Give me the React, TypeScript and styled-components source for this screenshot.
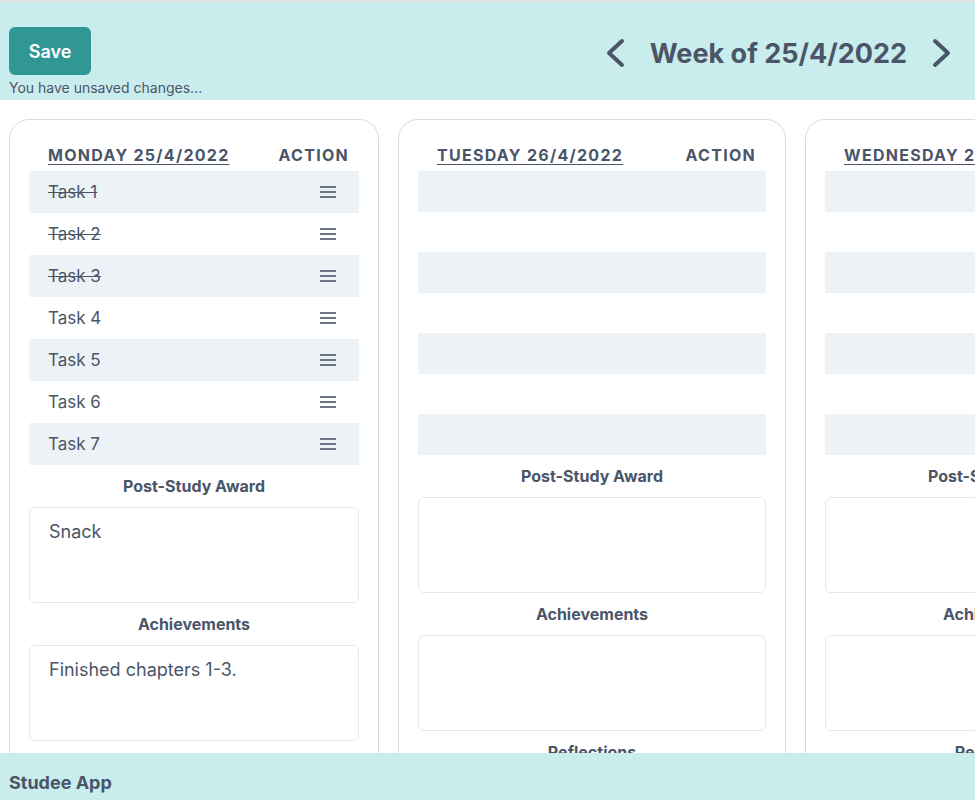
import styled, { createGlobalStyle } from "styled-components";

const GlobalStyle = createGlobalStyle`
  html, body {
    margin: 0;
    padding: 0;
  }
  body {
    font-family: Inter, "Noto Sans", sans-serif;
    color: #4a5568;
    background: #ffffff;
    border-top: 2px solid #e4e4e4;
    overflow: hidden;
  }
`;

const Header = styled.header`
  display: flex;
  justify-content: space-between;
  align-items: flex-start;
  background: #c9eced;
  padding: 25px 23px 3px 9px;
`;

const SaveGroup = styled.div`
  display: flex;
  flex-direction: column;
  align-items: flex-start;
`;

const SaveButton = styled.button`
  height: 48px;
  width: 82px;
  border: none;
  border-radius: 6px;
  background: #319795;
  color: #ffffff;
  font-family: inherit;
  font-size: 18px;
  font-weight: 600;
  cursor: pointer;
`;

const Unsaved = styled.div`
  margin-top: 4px;
  font-size: 14px;
  line-height: 18px;
  color: #4a5568;
`;

const WeekNav = styled.nav`
  display: flex;
  align-items: center;
  gap: 25px;
  height: 52px;
`;

const WeekTitle = styled.h1`
  margin: 0;
  font-size: 27px;
  font-weight: 700;
  color: #4a5568;
`;

const ArrowButton = styled.button`
  display: flex;
  padding: 0;
  border: none;
  background: none;
  color: #4a5568;
  cursor: pointer;
`;

const Board = styled.main`
  display: flex;
  gap: 19px;
  padding: 19px 0 0 9px;
  align-items: flex-start;
`;

const Card = styled.section<{ $width: number }>`
  flex: none;
  width: ${(p) => p.$width}px;
  padding: 19px 19px 60px;
  border: 1px solid #d3dce8;
  border-radius: 20px;
  background: #ffffff;
`;

const HeadRow = styled.div`
  display: flex;
  justify-content: space-between;
  align-items: center;
  height: 32px;
  padding: 0 10px 0 19px;
  font-size: 16px;
  font-weight: 700;
  letter-spacing: 0.08em;
  text-transform: uppercase;
  white-space: nowrap;
`;

const DayName = styled.span`
  text-decoration: underline;
  text-underline-offset: 3px;
  text-decoration-thickness: 1px;
`;

const TaskRow = styled.div<{ $striped: boolean; $empty?: boolean }>`
  display: flex;
  justify-content: space-between;
  align-items: center;
  height: ${(p) => (p.$empty ? "40.5px" : "42px")};
  padding: 0 23px 0 19px;
  background: ${(p) => (p.$striped ? "#edf2f7" : "transparent")};
`;

const TaskName = styled.span<{ $done: boolean }>`
  font-size: 17px;
  color: #4a5568;
  text-decoration: ${(p) => (p.$done ? "line-through" : "none")};
`;

const SectionLabel = styled.h3`
  margin: 11px 0;
  text-align: center;
  font-size: 16px;
  line-height: 20px;
  font-weight: 700;
`;

const NoteBox = styled.div`
  height: 96px;
  box-sizing: border-box;
  padding: 12px 19px;
  border: 1px solid #e2e8f0;
  border-radius: 6px;
  font-size: 18px;
  line-height: 24px;
`;

const Footer = styled.footer`
  position: fixed;
  left: 0;
  right: 0;
  bottom: 0;
  height: 47px;
  box-sizing: border-box;
  padding: 19px 9px 0;
  background: #c9eced;
  font-size: 18px;
  line-height: 22px;
  font-weight: 700;
`;

function Chevron({ dir }: { dir: "left" | "right" }) {
  return (
    <svg width="20" height="30" viewBox="0 0 20 30" fill="none">
      <polyline
        points={dir === "left" ? "17,3 4,15 17,27" : "3,3 16,15 3,27"}
        stroke="currentColor"
        strokeWidth="4"
        strokeLinecap="round"
        strokeLinejoin="round"
      />
    </svg>
  );
}

function DragHandle() {
  return (
    <svg width="16" height="12" viewBox="0 0 16 12">
      <g stroke="#4a5568" strokeWidth="1.6">
        <line x1="0" y1="1" x2="16" y2="1" />
        <line x1="0" y1="6" x2="16" y2="6" />
        <line x1="0" y1="11" x2="16" y2="11" />
      </g>
    </svg>
  );
}

type Task = { name: string; done: boolean };

type Day = {
  label: string;
  width: number;
  tasks: Task[];
  award: string;
  achievements: string;
};

const days: Day[] = [
  {
    label: "Monday 25/4/2022",
    width: 330,
    tasks: [
      { name: "Task 1", done: true },
      { name: "Task 2", done: true },
      { name: "Task 3", done: true },
      { name: "Task 4", done: false },
      { name: "Task 5", done: false },
      { name: "Task 6", done: false },
      { name: "Task 7", done: false },
    ],
    award: "Snack",
    achievements: "Finished chapters 1-3.",
  },
  { label: "Tuesday 26/4/2022", width: 348, tasks: [], award: "", achievements: "" },
  { label: "Wednesday 27/4/2022", width: 348, tasks: [], award: "", achievements: "" },
];

function DayCard({ day }: { day: Day }) {
  const rows = day.tasks.length > 0 ? day.tasks : null;
  return (
    <Card $width={day.width}>
      <HeadRow>
        <DayName>{day.label}</DayName>
        <span>Action</span>
      </HeadRow>
      {rows
        ? rows.map((task, i) => (
            <TaskRow key={task.name} $striped={i % 2 === 0}>
              <TaskName $done={task.done}>{task.name}</TaskName>
              <DragHandle />
            </TaskRow>
          ))
        : Array.from({ length: 7 }).map((_, i) => (
            <TaskRow key={i} $striped={i % 2 === 0} $empty />
          ))}
      <SectionLabel>Post-Study Award</SectionLabel>
      <NoteBox>{day.award}</NoteBox>
      <SectionLabel>Achievements</SectionLabel>
      <NoteBox>{day.achievements}</NoteBox>
      <SectionLabel>Reflections</SectionLabel>
      <NoteBox />
    </Card>
  );
}

export default function App() {
  return (
    <>
      <GlobalStyle />
      <Header>
        <SaveGroup>
          <SaveButton>Save</SaveButton>
          <Unsaved>You have unsaved changes...</Unsaved>
        </SaveGroup>
        <WeekNav>
          <ArrowButton aria-label="Previous week">
            <Chevron dir="left" />
          </ArrowButton>
          <WeekTitle>Week of 25/4/2022</WeekTitle>
          <ArrowButton aria-label="Next week">
            <Chevron dir="right" />
          </ArrowButton>
        </WeekNav>
      </Header>
      <Board>
        {days.map((day) => (
          <DayCard key={day.label} day={day} />
        ))}
      </Board>
      <Footer>Studee App</Footer>
    </>
  );
}
